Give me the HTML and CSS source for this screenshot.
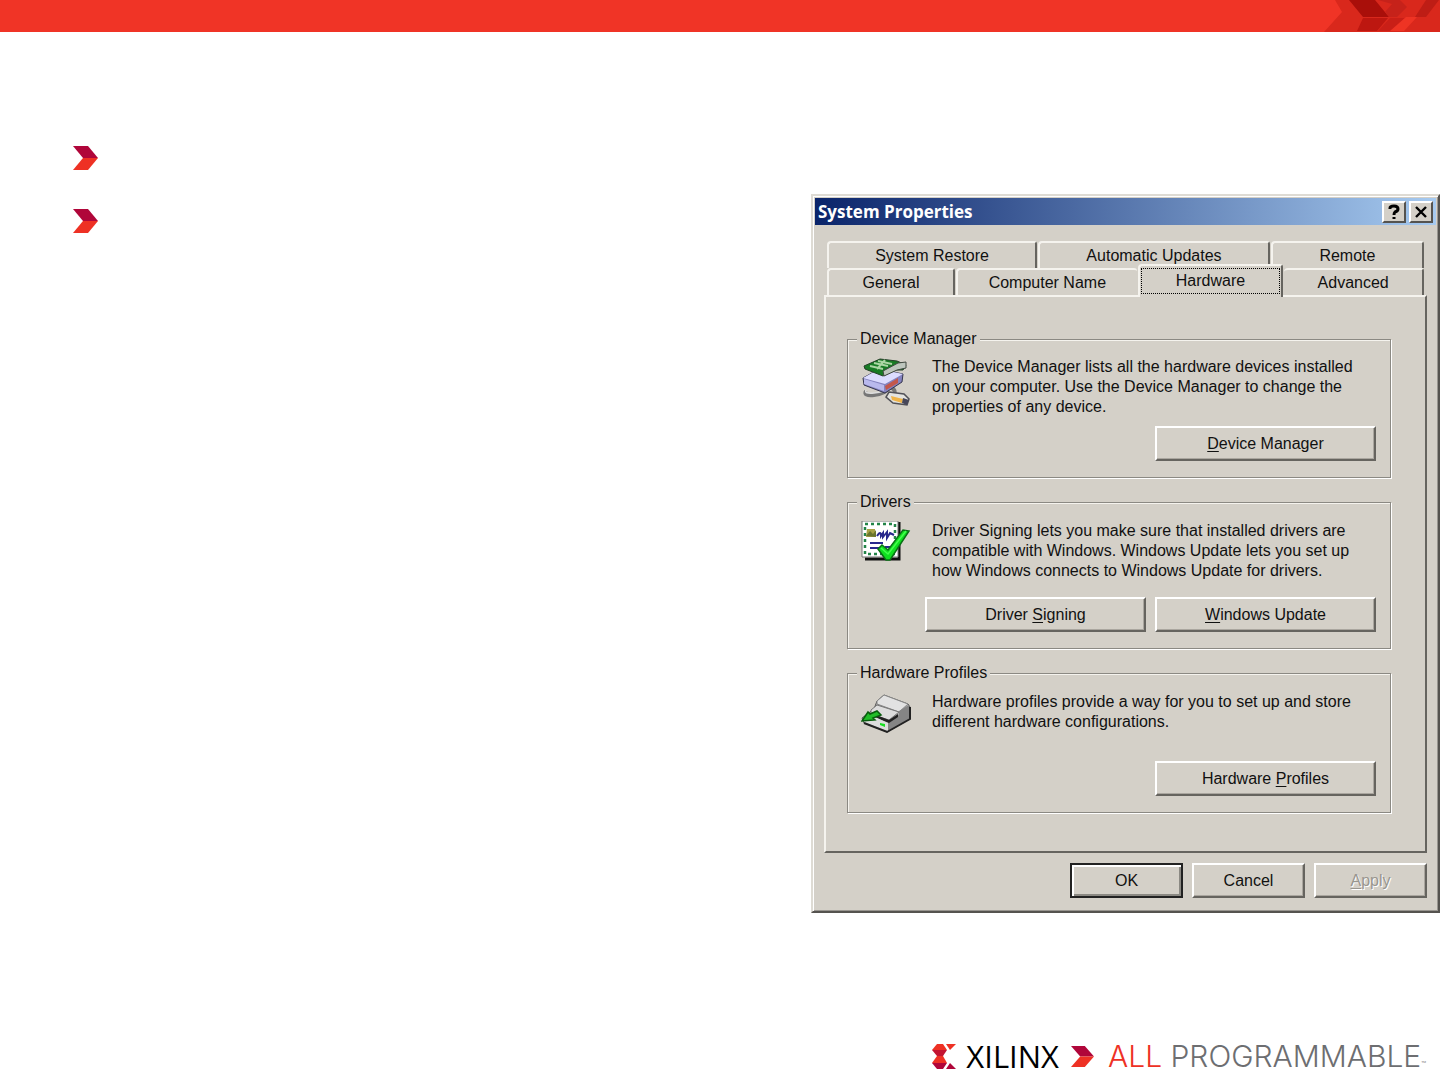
FILE: index.html
```
<!DOCTYPE html>
<html lang="en">
<head>
  <meta charset="utf-8">
  <title>System Properties</title>
  <link rel="stylesheet" href="styles.css">
</head>
<body>
  <header class="top-bar">
    <svg width="120" height="32" viewBox="0 0 120 32" aria-hidden="true">
      <path fill="#d9281c" d="M15 0H120V32H4L22 12Z"/>
      <path fill="#a90f0a" d="M29 0H55L69 17H43Z"/>
      <path fill="#bd1710" d="M43 18H68L57 31H37Z"/>
      <path fill="#c6221a" d="M58 0H80L87 7L77 17H69L65 12L72 4Z"/>
      <path fill="#c91f17" d="M70 18H85L73 31H58Z"/>
      <path fill="#ee3424" d="M86 17H97L84 31H70Z"/>
      <path fill="#be1d15" d="M106 0H119L106 17H95Z"/>
    </svg>
  </header>

  <main class="slide">
    <ul class="bullets">
      <li>
        <svg width="25" height="24" viewBox="0 0 25 24"><path fill="#b0063a" d="M0 0H15L25 12H10Z"/><path fill="#ee3124" d="M10 12H25L15 24H0Z"/></svg>
      </li>
      <li>
        <svg width="25" height="24" viewBox="0 0 25 24"><path fill="#b0063a" d="M0 0H15L25 12H10Z"/><path fill="#ee3124" d="M10 12H25L15 24H0Z"/></svg>
      </li>
    </ul>

    <section class="window">
      <div class="title-bar">
        <h1>System Properties</h1>
        <button class="title-btn" aria-label="Help">
          <svg width="14" height="16" viewBox="0 0 14 16"><path d="M3 5V4Q3 2 7 2T11 5Q11 7 8 8Q7 9 7 11M7 13V15" fill="none" stroke="#000" stroke-width="3"/></svg>
        </button>
        <button class="title-btn" aria-label="Close">
          <svg width="14" height="16" viewBox="0 0 14 16"><path d="M2 3L12 13M12 3L2 13" fill="none" stroke="#000" stroke-width="2.4"/></svg>
        </button>
      </div>

      <div class="window-body">
        <div class="tabs">
          <div class="tab-row">
            <button class="tab restore">System Restore</button>
            <button class="tab updates">Automatic Updates</button>
            <button class="tab remote">Remote</button>
          </div>
          <div class="tab-row">
            <button class="tab general">General</button>
            <button class="tab computer">Computer Name</button>
            <button class="tab hardware active"><span>Hardware</span></button>
            <button class="tab advanced">Advanced</button>
          </div>
        </div>

        <div class="panel">
          <fieldset>
            <legend>Device Manager</legend>
            <div class="info">
              <svg width="50" height="50" viewBox="0 0 50 50">
                <path d="M5 34Q2 39 13 38Q24 37 28 31Q34 30 34 37L40 46" fill="none" stroke="#777" stroke-width="4"/>
                <path d="M5 33Q3 37 13 36Q24 35 28 30" fill="none" stroke="#ddd" stroke-width="1.5"/>
                <path d="M2 21L18 12L42 17L41 25L24 36L3 28Z" fill="#8583bf" stroke="#35354e"/>
                <path d="M2 21L18 12L42 17L24 27Z" fill="#dcdcff"/>
                <path d="M3 22L23 28V34L3 27Z" fill="#b9b9ed"/>
                <path d="M24 29L37 21V26L25 33Z" fill="#c3574c"/>
                <path d="M3 9L19 2L36 4L45 8L42 13H35L22 19L4 12Z" fill="#187b25" stroke="#26412a"/>
                <path d="M13 6L27 9M17 4L31 7M9 9L22 12M24 3L16 12" stroke="#abd6a4" stroke-width="2"/>
                <path d="M22 14L37 6L45 5V11L36 13L23 19Z" fill="#bec6be" stroke="#414941"/>
                <path d="M28 35L43 37L48 42L46 48L32 46L25 40Z" fill="#e3e3df" stroke="#515157" stroke-width="1.5"/>
                <path d="M30 39L42 42L41 46L31 43Z" fill="#efb347"/>
                <path d="M42 41L48 43L46 48L41 46Z" fill="#47475a"/>
              </svg>
              <p>The Device Manager lists all the hardware devices installed on your computer. Use the Device Manager to change the properties of any device.</p>
            </div>
            <div class="actions">
              <button class="btn wide"><u>D</u>evice Manager</button>
            </div>
          </fieldset>

          <fieldset class="drivers">
            <legend>Drivers</legend>
            <div class="info">
              <svg width="50" height="50" viewBox="0 0 50 50">
                <path d="M38 1V38H4" fill="none" stroke="#111" stroke-width="3"/>
                <path d="M1 0H37V36H1Z" fill="#fff" stroke="#777"/>
                <path d="M4 3H34V33H4Z" fill="none" stroke="#238448" stroke-width="2.5" stroke-dasharray="3 3"/>
                <path d="M6 8H14V16H5Z" fill="#a8a345"/>
                <path d="M5 15L9 10L12 13L15 9V16Z" fill="#6a752d"/>
                <path d="M16 15Q20 9 20 15L22 12V16L26 11V17L29 12L33 14" fill="none" stroke="#27278b" stroke-width="2"/>
                <path d="M9 22H22M9 27H18M24 26H29" stroke="#28288d" stroke-width="2"/>
                <path d="M17 28L21 24L27 29L42 9L48 10L29 39H25Z" fill="#10df20" stroke="#087114" stroke-width="1.5"/>
                <path d="M20 27L27 33L45 10" fill="none" stroke="#43ff4d" stroke-width="1.5"/>
              </svg>
              <p>Driver Signing lets you make sure that installed drivers are compatible with Windows. Windows Update lets you set up how Windows connects to Windows Update for drivers.</p>
            </div>
            <div class="actions">
              <button class="btn wide">Driver <u>S</u>igning</button>
              <button class="btn wide"><u>W</u>indows Update</button>
            </div>
          </fieldset>

          <fieldset class="profiles">
            <legend>Hardware Profiles</legend>
            <div class="info">
              <svg width="50" height="50" viewBox="0 0 50 50">
                <path d="M16 9L23 3L47 12L49 15V27L26 40L3 31L1 26L13 17Z" fill="#aaa" stroke="#555"/>
                <path d="M16 9L23 3L47 12L38 20L16 12Z" fill="#e2e2e2" stroke="#888"/>
                <path d="M38 19L48 13V27L27 39V28L38 23Z" fill="#858585"/>
                <path d="M10 18L16 13L38 20L28 28L10 22Z" fill="#ddd" stroke="#777"/>
                <path d="M10 21L28 28L37 22V25L28 31L10 24Z" fill="#222"/>
                <path d="M3 27L12 24L27 31V39L3 30Z" fill="#ddd"/>
                <path d="M49 15V27L26 40L3 31" fill="none" stroke="#222" stroke-width="2"/>
                <path d="M1 29L7 20L9 22L16 19L20 23L12 26L14 28Z" fill="#21bd28" stroke="#075d0c" stroke-width="1.5"/>
                <path d="M19 31L24 32V35L19 33Z" fill="#18df22"/>
              </svg>
              <p>Hardware profiles provide a way for you to set up and store different hardware configurations.</p>
            </div>
            <div class="actions">
              <button class="btn wide">Hardware <u>P</u>rofiles</button>
            </div>
          </fieldset>
        </div>

        <div class="dialog-buttons">
          <button class="btn default">OK</button>
          <button class="btn">Cancel</button>
          <button class="btn" disabled><u>A</u>pply</button>
        </div>
      </div>
    </section>
  </main>

  <footer class="brand">
    <svg width="24" height="25" viewBox="0 0 24 25" aria-hidden="true">
      <path fill="#ee3124" d="M5 0H11L15 6H0Z"/>
      <path fill="#c31432" d="M0 6H15L11 12H5Z"/>
      <path fill="#ee3124" d="M5 12H11L15 19H0Z"/>
      <path fill="#b0063a" d="M0 19H15L11 25H5Z"/>
      <path fill="#ee3124" d="M14 0H24L18 6Z"/>
      <path fill="#b0063a" d="M14 25H24L18 19Z"/>
    </svg>
    <span class="xilinx">XILINX</span>
    <svg class="arrow" width="23" height="21" viewBox="0 0 25 24" preserveAspectRatio="none" aria-hidden="true"><path fill="#b0063a" d="M0 0H15L25 12H10Z"/><path fill="#ee3124" d="M10 12H25L15 24H0Z"/></svg>
    <span class="tagline"><span class="all">ALL</span> PROGRAMMABLE<small>™</small></span>
  </footer>
</body>
</html>
```

FILE: styles.css
```
* {
  box-sizing: border-box;
}
body {
  margin: 0;
  min-height: 100vh;
  display: flex;
  flex-direction: column;
  background: #fff;
  color: #111;
  font-family: "Liberation Sans", Arial, sans-serif;
  font-size: 16px;
  line-height: 20px;
}
svg {
  display: block;
  flex: none;
}
button {
  font: inherit;
  color: inherit;
  padding: 0;
  background: #d4d0c8;
}
.top-bar {
  display: flex;
  justify-content: flex-end;
  height: 32px;
  background: #f03426;
}
.slide {
  flex: 1;
  display: flex;
  align-items: flex-start;
  justify-content: space-between;
}
.bullets {
  list-style: none;
  margin: 0;
  padding: 114px 0 0 73px;
  display: grid;
  gap: 39px;
}

/* dialog window */
.window {
  width: 44%;
  max-width: 629px;
  margin-top: 162px;
  padding: 2px;
  background: #d4d0c8;
  border: 2px solid;
  border-color: #dedbd4 #55534f #55534f #dedbd4;
  box-shadow: inset 1px 1px 0 #fff, inset -1px -1px 0 #999690;
}
.title-bar {
  display: flex;
  align-items: center;
  gap: 3px;
  height: 27px;
  padding: 0 3px;
  background: linear-gradient(to right, #0a246a, #a6caf0);
}
.title-bar h1 {
  flex: 1;
  margin: 0;
  color: #fff;
  font: bold 17px/24px "Open Sans", Tahoma, sans-serif;
}
.title-btn {
  display: flex;
  align-items: center;
  justify-content: center;
  width: 24px;
  height: 22px;
  border: 2px solid;
  border-color: #fff #55534f #55534f #fff;
}
.window-body {
  padding: 16px 9px 11px;
}
.tabs {
  padding: 0 3px;
}
.tab-row {
  display: flex;
  gap: 1px;
  height: 27px;
}
.tab {
  height: 27px;
  border: 2px solid;
  border-color: #f5f3ee #66645f transparent #f5f3ee;
  border-bottom: 0;
  border-radius: 4px 3px 0 0;
}
.restore {
  flex: 210;
}
.updates {
  flex: 232;
}
.remote {
  flex: 152;
}
.general {
  flex: 127;
}
.computer {
  flex: 183;
  border-right: 0;
}
.hardware {
  flex: 143;
}
.advanced {
  flex: 141;
  border-left: 0;
}
.tab.active {
  height: 33px;
  margin-top: -4px;
  padding: 1px 1px 2px;
  z-index: 1;
}
.tab.active span {
  display: block;
  height: 26px;
  line-height: 24px;
  border: 1px dotted #000;
}
.panel {
  display: grid;
  gap: 14px;
  padding: 32px 34px 38px 21px;
  border: 2px solid;
  border-color: #f5f3ee #66645f #66645f #f5f3ee;
}
fieldset {
  min-width: 0;
  margin: 0;
  padding: 8px 14px 16px 13px;
  border: 1px solid #8b8983;
  box-shadow: 1px 1px 0 #fff, inset 1px 1px 0 #f5f3ee;
}
.drivers,
.profiles {
  padding-top: 9px;
}
legend {
  margin-left: -4px;
  padding: 0 3px;
  background: #d4d0c8;
}
.info {
  display: flex;
  gap: 21px;
  min-height: 60px;
}
.info p {
  flex: 1;
  margin: 0;
  padding-right: 16px;
}
.actions {
  display: flex;
  justify-content: flex-end;
  gap: 9px;
  margin-top: 9px;
}
.drivers .actions {
  margin-top: 16px;
}
.btn {
  width: 113px;
  height: 35px;
  border: 2px solid;
  border-color: #fff #66645f #66645f #fff;
  box-shadow: inset -1px -1px 0 #aaa69f;
}
.btn.wide {
  width: 221px;
}
.btn.default {
  border-color: #222;
  box-shadow: inset 2px 2px 0 #fff, inset -2px -2px 0 #8b8983;
}
.btn:disabled {
  color: #99968f;
  text-shadow: 1px 1px 0 #fff;
}
u {
  text-underline-offset: 2px;
}
.dialog-buttons {
  display: flex;
  justify-content: flex-end;
  gap: 9px;
  margin-top: 10px;
}

/* logo strip */
.brand {
  display: flex;
  align-items: center;
  justify-content: flex-end;
  padding: 0 14px 6px 0;
  line-height: 36px;
}
.xilinx {
  margin-left: 10px;
  color: #000;
  font-family: "Open Sans", sans-serif;
  font-size: 31px;
  font-weight: 500;
}
.arrow {
  margin: 0 14px 0 12px;
}
.tagline {
  color: #6d6e71;
  font-family: Inter, sans-serif;
  font-size: 30px;
  font-weight: 300;
}
.all {
  color: #ee3124;
}
.tagline small {
  font-size: 8px;
  line-height: 8px;
}
```
